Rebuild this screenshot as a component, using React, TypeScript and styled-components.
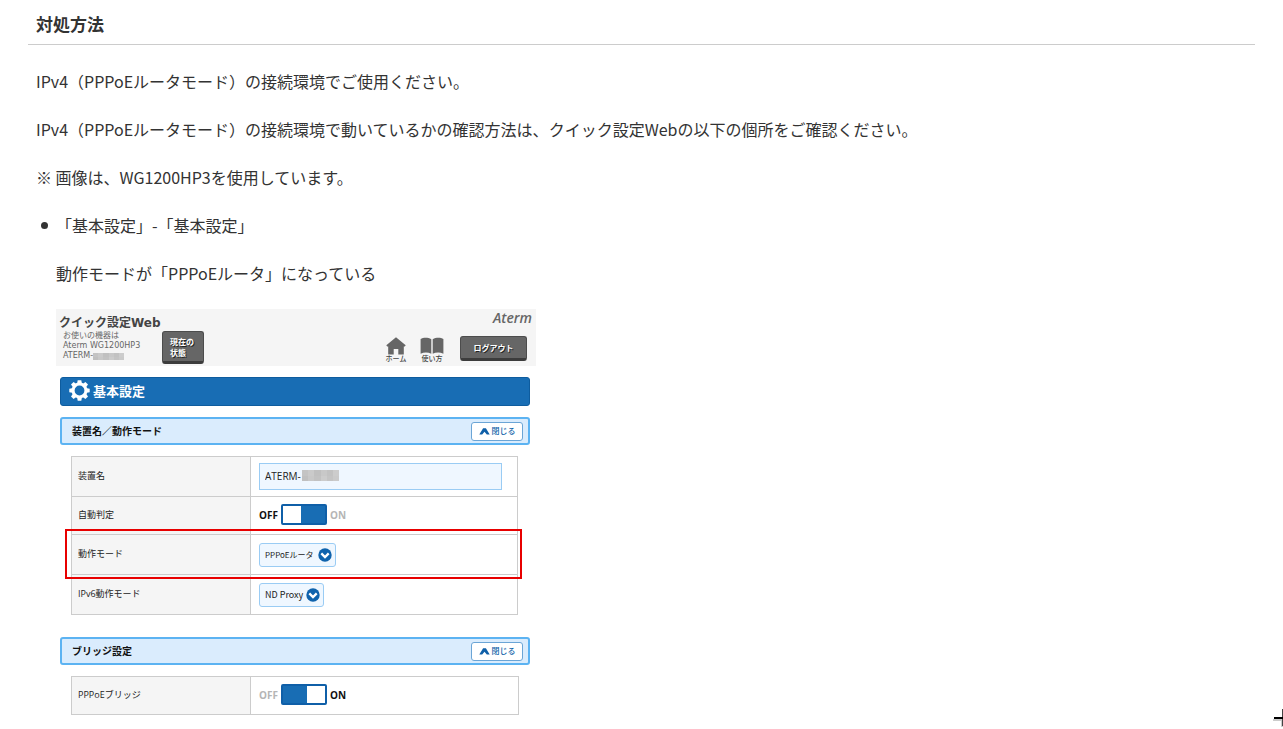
import React from "react";
import styled, { createGlobalStyle, css } from "styled-components";

const GlobalStyle = createGlobalStyle`
  *, *::before, *::after { box-sizing: border-box; }
  body {
    margin: 0;
    background: #fff;
    color: #333;
    font-family: "Noto Sans CJK JP", sans-serif;
    font-size: 16px;
    line-height: 24px;
  }
`;

const uiFont = css`font-family: "Open Sans", "Noto Sans CJK JP", sans-serif;`;

const Page = styled.main`
  padding: 8px 28px 0;
`;

const Heading = styled.h2`
  margin: 0;
  padding: 4px 8px 8px;
  border-bottom: 1px solid #ccc;
  font-size: 17px;
  font-weight: 700;
  line-height: 24px;
`;

const Article = styled.div`
  padding: 24px 8px 0;
`;

const Paragraph = styled.p`
  margin: 0 0 24px;
`;

const Steps = styled.ul`
  margin: 0;
  padding: 0;
  list-style: none;
`;

const Step = styled.li`
  display: flex;
  gap: 8px;
  padding-left: 5px;
  &::before {
    content: "";
    flex: 0 0 7px;
    height: 7px;
    margin-top: 9px;
    border-radius: 50%;
    background: #333;
  }
`;

const StepBody = styled.div`
  flex: 1;
  min-width: 0;
`;

const Screen = styled.section`
  ${uiFont}
  max-width: 480px;
  margin-top: 23px;
  color: #222;
  font-size: 9px;
  line-height: 12px;
`;

const ScreenHeader = styled.header`
  display: flex;
  height: 57px;
  padding: 0 9px 0 3px;
  background: #f5f5f5;
`;

const Device = styled.div`
  flex: 0 0 103px;
  color: #666;
  font-family: "DejaVu Sans", "Noto Sans CJK JP", sans-serif;
  font-size: 8px;
  line-height: 10px;
  white-space: nowrap;
`;

const DeviceTitle = styled.h3`
  margin: 0;
  padding-top: 6px;
  color: #444;
  font-size: 12px;
  font-weight: 700;
  line-height: 16px;
`;

const DeviceLine = styled.div`
  display: flex;
  align-items: center;
  padding-left: 4px;
`;

const Mosaic = styled.svg`
  display: block;
`;

const DarkButton = styled.button`
  padding: 0 8px;
  border: 1px solid #4c4c4c;
  border-bottom: 3px solid #3c3c3c;
  border-radius: 3px;
  background: #666;
  color: #fff;
  font: inherit;
  font-size: 8px;
  font-weight: 700;
  line-height: 11px;
  text-shadow: 1px 1px 0 #222;
  text-align: left;
  white-space: nowrap;
`;

const StatusButton = styled(DarkButton)`
  width: 42px;
  height: 33px;
  margin-top: 22px;
  padding: 0 7px;
`;

const LogoutButton = styled(DarkButton)`
  width: 67px;
  height: 25px;
  margin-left: 10px;
  text-align: center;
`;

const HeaderRight = styled.div`
  display: flex;
  flex: 1;
  flex-direction: column;
  align-items: flex-end;
`;

const Brand = styled.div`
  height: 27px;
  margin-right: -5px;
  color: #666;
  font-family: "Open Sans", sans-serif;
  font-size: 14px;
  font-style: italic;
  font-weight: 600;
  line-height: 18px;
`;

const HeaderNav = styled.nav`
  display: flex;
`;

const NavLink = styled.a`
  display: flex;
  flex-direction: column;
  align-items: center;
  width: 36px;
  padding-top: 1px;
  color: #444;
  font-size: 7px;
  font-weight: 500;
  line-height: 8px;
  text-decoration: none;
`;

const PageBar = styled.h3`
  display: flex;
  align-items: center;
  gap: 3px;
  height: 29px;
  margin: 11px 6px 0 4px;
  padding: 0 8px 2px;
  border: 1px solid #0e5c9e;
  border-radius: 3px;
  background: #186db4;
  color: #fff;
  font-size: 13px;
  font-weight: 700;
`;

const SectionBar = styled.div<{ $top: number }>`
  display: flex;
  align-items: center;
  justify-content: space-between;
  height: 28px;
  margin: ${(p) => p.$top}px 6px 0 4px;
  padding: 0 5px 0 10px;
  border: 2px solid #5cb3f2;
  border-radius: 3px;
  background: #daecfd;
`;

const SectionTitle = styled.h4`
  margin: 0;
  color: #111;
  font-size: 10px;
  font-weight: 700;
`;

const CloseButton = styled.button`
  display: flex;
  align-items: center;
  justify-content: center;
  gap: 2px;
  width: 52px;
  height: 19px;
  padding: 0;
  border: 1px solid #6ba5d6;
  border-radius: 3px;
  background: #fff;
  color: #0f5fa8;
  font: inherit;
  font-size: 8px;
  font-weight: 500;
`;

const Settings = styled.table`
  width: calc(100% - 32px);
  margin: 11px 0 0 15px;
  border-collapse: collapse;
`;

const SettingRow = styled.tr<{ $height: number; $marked?: boolean }>`
  height: ${(p) => p.$height}px;
  ${(p) =>
    p.$marked &&
    css`
      position: relative;
      z-index: 1;
      &::after {
        content: "";
        position: absolute;
        inset: -6px -3px -4px -7px;
        border: 2px solid #e80000;
        pointer-events: none;
      }
    `}
`;

const SettingName = styled.th`
  width: 179px;
  padding: 0 6px 2px;
  border: 1px solid #ccc;
  background: #f5f5f5;
  font-weight: 400;
  text-align: left;
`;

const SettingValue = styled.td`
  padding: 0 8px;
  border: 1px solid #ccc;
`;

const NameField = styled.div`
  position: relative;
  width: 243px;
`;

const NameInput = styled.input`
  display: block;
  width: 100%;
  height: 27px;
  padding: 0 5px 2px;
  border: 1px solid #9accf4;
  background: #eff7ff;
  color: #222;
  font: inherit;
  font-size: 10px;
`;

const NameMask = styled.div`
  position: absolute;
  top: 7px;
  left: 43px;
`;

const SwitchLabel = styled.label`
  display: flex;
  align-items: center;
  gap: 3px;
  padding-bottom: 2px;
  font-size: 10px;
  font-weight: 700;
`;

const SwitchText = styled.span<{ $on: boolean }>`
  color: ${(p) => (p.$on ? "#111" : "#b5b5b5")};
`;

const SwitchInput = styled.input`
  width: 46px;
  height: 21px;
  margin: 0;
  border: 2px solid #0f5fa8;
  border-radius: 2px;
  appearance: none;
  background: linear-gradient(#fff, #fff) left / 18px 100% no-repeat #186db4;
  &:checked {
    background-position: right;
  }
`;

const SelectBox = styled.div`
  position: relative;
  width: fit-content;
`;

const Select = styled.select<{ $width: number; $size: number }>`
  display: block;
  width: ${(p) => p.$width}px;
  height: 24px;
  padding: 0 0 0 5px;
  border: 1px solid #9accf4;
  border-radius: 3px;
  appearance: none;
  background: #eff7ff;
  color: #222;
  font-family: "Noto Sans CJK JP", sans-serif;
  font-size: ${(p) => p.$size}px;
`;

const SelectArrow = styled.svg`
  position: absolute;
  top: 5px;
  right: 4px;
  pointer-events: none;
`;

const Pointer = styled.svg`
  position: fixed;
  right: 0;
  bottom: 0;
`;

const mosaicTones = ["#c4c4c4", "#cacaca", "#c0c0c0", "#c8c8c8", "#c2c2c2", "#cccccc"];

function Redacted({ width, height }: { width: number; height: number }) {
  return (
    <Mosaic
      width={width}
      height={height}
      viewBox="0 0 36 12"
      preserveAspectRatio="none"
      shapeRendering="crispEdges"
      aria-hidden="true"
    >
      {mosaicTones.map((tone, i) => (
        <g key={i}>
          <rect x={i * 6} width="6" height="6" fill={tone} />
          <rect x={i * 6} y="6" width="6" height="6" fill={mosaicTones[(i + 2) % 6]} />
        </g>
      ))}
    </Mosaic>
  );
}

function Gear() {
  return (
    <svg width="21" height="21" viewBox="-10.5 -10.5 21 21" aria-hidden="true">
      {[0, 45, 90, 135, 180, 225, 270, 315].map((a) => (
        <path key={a} d="M-2.6 -6L-1.8 -10.2H1.8L2.6 -6Z" fill="#fff" transform={`rotate(${a})`} />
      ))}
      <circle r="6.4" fill="none" stroke="#fff" strokeWidth="3" />
    </svg>
  );
}

function Close() {
  return (
    <CloseButton type="button">
      <svg width="11" height="8" viewBox="0 0 11 8" aria-hidden="true">
        <path d="M0.3 7.4L4.1 1.3H6.9L10.7 7.4H7.8L5.5 4.8L3.2 7.4Z" fill="#0f5fa8" />
      </svg>
      閉じる
    </CloseButton>
  );
}

function Toggle({ label, on }: { label: string; on?: boolean }) {
  return (
    <SwitchLabel>
      <SwitchText $on={!on}>OFF</SwitchText>
      <SwitchInput type="checkbox" role="switch" aria-label={label} defaultChecked={on} />
      <SwitchText $on={!!on}>ON</SwitchText>
    </SwitchLabel>
  );
}

function Dropdown({ id, value, width, size }: { id: string; value: string; width: number; size: number }) {
  return (
    <SelectBox>
      <Select id={id} $width={width} $size={size} defaultValue={value}>
        <option>{value}</option>
      </Select>
      <SelectArrow width="14" height="14" viewBox="0 0 14 14" aria-hidden="true">
        <circle cx="7" cy="7" r="6.7" fill="#0f63ad" />
        <path d="M3.3 5.4L7 9.1L10.7 5.4" fill="none" stroke="#fff" strokeWidth="2.3" />
      </SelectArrow>
    </SelectBox>
  );
}

export default function App() {
  return (
    <>
      <GlobalStyle />
      <Page lang="ja">
        <Heading>対処方法</Heading>
        <Article>
          <Paragraph>IPv4（PPPoEルータモード）の接続環境でご使用ください。</Paragraph>
          <Paragraph>
            IPv4（PPPoEルータモード）の接続環境で動いているかの確認方法は、クイック設定Webの以下の個所をご確認ください。
          </Paragraph>
          <Paragraph>※ 画像は、WG1200HP3を使用しています。</Paragraph>
          <Steps>
            <Step>
              <StepBody>
                <Paragraph>「基本設定」-「基本設定」</Paragraph>
                <Paragraph>動作モードが「PPPoEルータ」になっている</Paragraph>
                <Screen>
                  <ScreenHeader>
                    <Device>
                      <DeviceTitle>クイック設定Web</DeviceTitle>
                      <DeviceLine>お使いの機器は</DeviceLine>
                      <DeviceLine>Aterm WG1200HP3</DeviceLine>
                      <DeviceLine>
                        ATERM-
                        <Redacted width={31} height={7} />
                      </DeviceLine>
                    </Device>
                    <StatusButton type="button">
                      現在の
                      <br />
                      状態
                    </StatusButton>
                    <HeaderRight>
                      <Brand>Aterm</Brand>
                      <HeaderNav>
                        <NavLink href="#home">
                          <svg width="20" height="18" viewBox="0 0 20 18" aria-hidden="true">
                            <path
                              d="M10 0.3L19.7 8.2L18.8 9.6H17.8V17.6H12.3V12H7.7V17.6H2.2V9.6H1.2L0.3 8.2Z"
                              fill="#666"
                            />
                          </svg>
                          ホーム
                        </NavLink>
                        <NavLink href="#guide">
                          <svg width="24" height="18" viewBox="0 0 24 18" aria-hidden="true">
                            <path d="M0.6 2C3.5 0.4 8 0.4 11.3 2.2V16.8C8 15 4 15 0.6 16.8Z" fill="#666" />
                            <path d="M23.4 2C20.5 0.4 16 0.4 12.7 2.2V16.8C16 15 20 15 23.4 16.8Z" fill="#666" />
                          </svg>
                          使い方
                        </NavLink>
                        <LogoutButton type="button">ログアウト</LogoutButton>
                      </HeaderNav>
                    </HeaderRight>
                  </ScreenHeader>

                  <PageBar>
                    <Gear />
                    基本設定
                  </PageBar>

                  <SectionBar $top={11}>
                    <SectionTitle>装置名／動作モード</SectionTitle>
                    <Close />
                  </SectionBar>
                  <Settings>
                    <tbody>
                      <SettingRow $height={40}>
                        <SettingName scope="row">
                          <label htmlFor="device-name">装置名</label>
                        </SettingName>
                        <SettingValue>
                          <NameField>
                            <NameInput id="device-name" defaultValue="ATERM-" />
                            <NameMask>
                              <Redacted width={37} height={11} />
                            </NameMask>
                          </NameField>
                        </SettingValue>
                      </SettingRow>
                      <SettingRow $height={38}>
                        <SettingName scope="row">自動判定</SettingName>
                        <SettingValue>
                          <Toggle label="自動判定" />
                        </SettingValue>
                      </SettingRow>
                      <SettingRow $height={40} $marked>
                        <SettingName scope="row">
                          <label htmlFor="mode">動作モード</label>
                        </SettingName>
                        <SettingValue>
                          <Dropdown id="mode" value="PPPoEルータ" width={77} size={8} />
                        </SettingValue>
                      </SettingRow>
                      <SettingRow $height={40}>
                        <SettingName scope="row">
                          <label htmlFor="ipv6-mode">IPv6動作モード</label>
                        </SettingName>
                        <SettingValue>
                          <Dropdown id="ipv6-mode" value="ND Proxy" width={65} size={9} />
                        </SettingValue>
                      </SettingRow>
                    </tbody>
                  </Settings>

                  <SectionBar $top={22}>
                    <SectionTitle>ブリッジ設定</SectionTitle>
                    <Close />
                  </SectionBar>
                  <Settings>
                    <tbody>
                      <SettingRow $height={38}>
                        <SettingName scope="row">PPPoEブリッジ</SettingName>
                        <SettingValue>
                          <Toggle label="PPPoEブリッジ" on />
                        </SettingValue>
                      </SettingRow>
                    </tbody>
                  </Settings>
                </Screen>
              </StepBody>
            </Step>
          </Steps>
        </Article>
      </Page>
      <Pointer width="10" height="22" viewBox="0 0 10 22" aria-hidden="true">
        <path d="M0 13H9V20" fill="none" stroke="#ccc" strokeWidth="2" />
        <path d="M9 2H10V19H9Z" fill="#444" />
        <path d="M1 10H10V12H1Z" fill="#000" />
      </Pointer>
    </>
  );
}
